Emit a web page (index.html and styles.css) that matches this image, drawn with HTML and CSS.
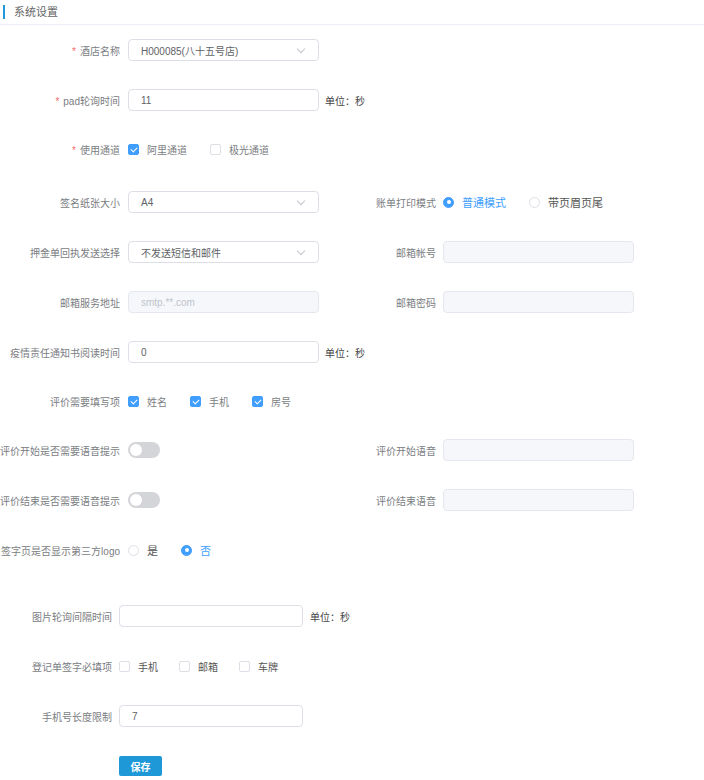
FILE: index.html
```html
<!DOCTYPE html>
<html lang="zh-CN">
<head>
    <meta charset="UTF-8">
    <meta name="viewport" content="width=device-width, initial-scale=1.0">
    <title>系统设置</title>
    <link rel="stylesheet" href="styles.css">
</head>
<body>
    <div class="page-title"><span class="title-text">系统设置</span></div>

    <form class="settings-form">
        <div class="form-row">
            <div class="form-item">
                <label class="item-label"><span class="required">*</span>酒店名称</label>
                <div class="select"><span>H000085(八十五号店)</span><i class="arrow"></i></div>
            </div>
        </div>

        <div class="form-row">
            <div class="form-item">
                <label class="item-label"><span class="required">*</span>pad轮询时间</label>
                <input class="text-input" type="text" value="11">
                <span class="unit">单位：秒</span>
            </div>
        </div>

        <div class="form-row row-channels">
            <div class="form-item">
                <label class="item-label"><span class="required">*</span>使用通道</label>
                <div class="check-group">
                    <span class="check checked"><i class="box"></i>阿里通道</span>
                    <span class="check"><i class="box"></i>极光通道</span>
                </div>
            </div>
        </div>

        <div class="form-row">
            <div class="form-item">
                <label class="item-label">签名纸张大小</label>
                <div class="select"><span>A4</span><i class="arrow"></i></div>
            </div>
            <div class="form-item right">
                <label class="item-label">账单打印模式</label>
                <div class="radio-group large">
                    <span class="radio checked"><i class="dot"></i>普通模式</span>
                    <span class="radio"><i class="dot"></i>带页眉页尾</span>
                </div>
            </div>
        </div>

        <div class="form-row">
            <div class="form-item">
                <label class="item-label">押金单回执发送选择</label>
                <div class="select"><span>不发送短信和邮件</span><i class="arrow"></i></div>
            </div>
            <div class="form-item right">
                <label class="item-label">邮箱帐号</label>
                <input class="text-input" type="text" disabled>
            </div>
        </div>

        <div class="form-row">
            <div class="form-item">
                <label class="item-label">邮箱服务地址</label>
                <input class="text-input" type="text" placeholder="smtp.**.com" disabled>
            </div>
            <div class="form-item right">
                <label class="item-label">邮箱密码</label>
                <input class="text-input" type="text" disabled>
            </div>
        </div>

        <div class="form-row">
            <div class="form-item">
                <label class="item-label">疫情责任通知书阅读时间</label>
                <input class="text-input" type="text" value="0">
                <span class="unit">单位：秒</span>
            </div>
        </div>

        <div class="form-row row-review">
            <div class="form-item">
                <label class="item-label">评价需要填写项</label>
                <div class="check-group">
                    <span class="check checked"><i class="box"></i>姓名</span>
                    <span class="check checked"><i class="box"></i>手机</span>
                    <span class="check checked"><i class="box"></i>房号</span>
                </div>
            </div>
        </div>

        <div class="form-row">
            <div class="form-item">
                <label class="item-label">评价开始是否需要语音提示</label>
                <span class="switch"><i class="knob"></i></span>
            </div>
            <div class="form-item right">
                <label class="item-label">评价开始语音</label>
                <input class="text-input" type="text" disabled>
            </div>
        </div>

        <div class="form-row">
            <div class="form-item">
                <label class="item-label">评价结束是否需要语音提示</label>
                <span class="switch"><i class="knob"></i></span>
            </div>
            <div class="form-item right">
                <label class="item-label">评价结束语音</label>
                <input class="text-input" type="text" disabled>
            </div>
        </div>

        <div class="form-row">
            <div class="form-item">
                <label class="item-label">签字页是否显示第三方logo</label>
                <div class="radio-group large">
                    <span class="radio"><i class="dot"></i>是</span>
                    <span class="radio checked"><i class="dot"></i>否</span>
                </div>
            </div>
        </div>

        <div class="section-two">
            <div class="form-row">
                <div class="form-item">
                    <label class="item-label">图片轮询间隔时间</label>
                    <input class="text-input" type="text">
                    <span class="unit">单位：秒</span>
                </div>
            </div>

            <div class="form-row">
                <div class="form-item">
                    <label class="item-label">登记单签字必填项</label>
                    <div class="check-group dark">
                        <span class="check"><i class="box"></i>手机</span>
                        <span class="check"><i class="box"></i>邮箱</span>
                        <span class="check"><i class="box"></i>车牌</span>
                    </div>
                </div>
            </div>

            <div class="form-row">
                <div class="form-item">
                    <label class="item-label">手机号长度限制</label>
                    <input class="text-input" type="text" value="7">
                </div>
            </div>

            <div class="form-row">
                <div class="form-item">
                    <label class="item-label"></label>
                    <button type="button" class="save-btn">保存</button>
                </div>
            </div>
        </div>
    </form>
</body>
</html>
```

FILE: styles.css
```css
/* General Reset */
* {
    margin: 0;
    padding: 0;
    box-sizing: border-box;
}

body {
    font-family: 'Liberation Sans', 'Noto Sans CJK SC', sans-serif;
    font-size: 10px;
    color: #606266;
    background: #fff;
    width: 704px;
}

/* Header */
.page-title {
    height: 25px;
    border-bottom: 1px solid #ebeef5;
    display: flex;
    align-items: center;
    padding-left: 3px;
}

.title-text {
    border-left: 2px solid #1e98d7;
    padding-left: 9px;
    font-size: 11px;
    line-height: 14px;
    color: #666;
}

/* Rows */
.form-row {
    display: flex;
    height: 50px;
    align-items: center;
}

.row-channels {
    margin-top: -1px;
    margin-bottom: 3px;
}

.row-review {
    margin-top: -1px;
    margin-bottom: -1px;
}

.form-item {
    display: flex;
    align-items: center;
    width: 352px;
    flex-shrink: 0;
}

.item-label {
    width: 128px;
    padding-right: 8px;
    text-align: right;
    flex-shrink: 0;
    color: #7b7d82;
    font-size: 10px;
    white-space: nowrap;
}

.required {
    color: #f56c6c;
    margin-right: 4px;
}

.form-item.right .item-label {
    width: 91px;
    padding-right: 7px;
}

/* Inputs */
.text-input,
.select {
    width: 191px;
    flex-shrink: 0;
    height: 22px;
    border: 1px solid #dcdfe6;
    border-radius: 4px;
    padding: 0 12px;
    font-family: inherit;
    font-size: 10px;
    color: #606266;
    outline: none;
    background: #fff;
}

.text-input:disabled {
    background: #f5f7fa;
    border-color: #e4e7ed;
}

.text-input::placeholder {
    color: #c0c4cc;
}

.select {
    display: flex;
    align-items: center;
    justify-content: space-between;
}

.select .arrow {
    width: 6px;
    height: 6px;
    border-right: 1px solid #c0c4cc;
    border-bottom: 1px solid #c0c4cc;
    transform: rotate(45deg);
    margin-top: -3px;
    margin-right: 2px;
}

.unit {
    margin-left: 6px;
    color: #444;
    font-size: 10px;
    white-space: nowrap;
}

/* Checkboxes */
.check-group,
.radio-group {
    display: flex;
    align-items: center;
}

.check {
    display: flex;
    align-items: center;
    margin-right: 23px;
    color: #7b7d82;
    white-space: nowrap;
}

.check-group.dark .check {
    color: #555;
    margin-right: 21px;
}

.check .box {
    width: 11px;
    height: 11px;
    border: 1px solid #dcdfe6;
    border-radius: 2px;
    margin-right: 8px;
    position: relative;
    background: #fff;
}

.check.checked .box {
    background: #409eff;
    border-color: #409eff;
}

.check.checked .box::after {
    content: '';
    position: absolute;
    left: 3px;
    top: 1px;
    width: 3px;
    height: 5px;
    border-right: 1px solid #fff;
    border-bottom: 1px solid #fff;
    transform: rotate(45deg);
}

/* Radios */
.radio {
    display: flex;
    align-items: center;
    margin-right: 23px;
    color: #555;
    white-space: nowrap;
}

.radio-group.large .radio {
    font-size: 11px;
}

.radio .dot {
    width: 11px;
    height: 11px;
    border: 1px solid #dcdfe6;
    border-radius: 50%;
    margin-right: 8px;
    position: relative;
}

.radio.checked {
    color: #409eff;
}

.radio.checked .dot {
    background: #409eff;
    border-color: #409eff;
}

.radio.checked .dot::after {
    content: '';
    position: absolute;
    left: 2.5px;
    top: 2.5px;
    width: 4px;
    height: 4px;
    border-radius: 50%;
    background: #fff;
}

/* Switch */
.switch {
    width: 32px;
    height: 16px;
    border-radius: 8px;
    background: #d4d5d8;
    display: flex;
    align-items: center;
    padding-left: 2px;
}

.switch .knob {
    width: 12px;
    height: 12px;
    border-radius: 50%;
    background: #fff;
}

/* Second section */
.section-two {
    margin-top: 16px;
}

.section-two .item-label {
    width: 119px;
    padding-right: 7px;
}

.section-two .text-input {
    width: 184px;
}

.section-two .unit {
    margin-left: 7px;
}

.save-btn {
    width: 43px;
    height: 20px;
    border: none;
    border-radius: 2px;
    background: #1e98d7;
    color: #fff;
    font-family: inherit;
    font-size: 10px;
    font-weight: bold;
    cursor: pointer;
}
```
